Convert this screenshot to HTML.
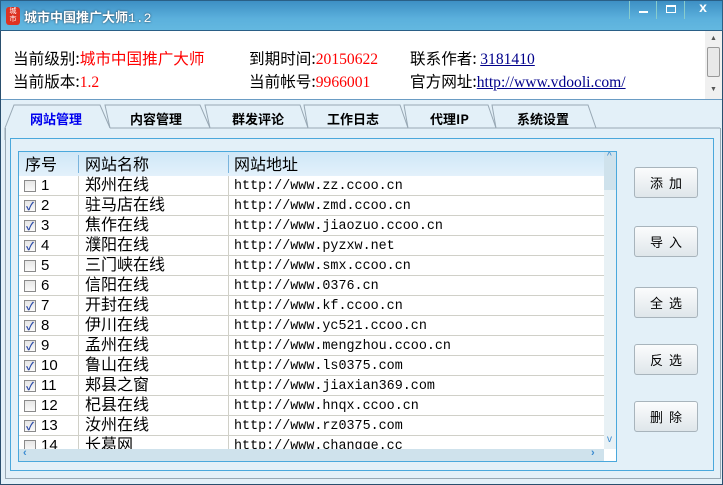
<!DOCTYPE html>
<html><head><meta charset="utf-8"><style>
*{margin:0;padding:0;box-sizing:border-box}
body{width:723px;height:485px;overflow:hidden;background:#e3f0f8;font-family:"Liberation Sans","Noto Sans CJK SC",sans-serif;position:relative}
.abs{position:absolute}
#title{left:0;top:0;width:723px;height:31px;background:linear-gradient(#3d8fc4,#5bb0dc 60%,#63b8e0);border:1px solid #2a5f86}
#info{left:1px;top:31px;width:721px;height:69px;background:#fff;border-bottom:1px solid #6a9cc4}
.t{position:absolute;font-size:15.6px;white-space:nowrap;color:#000;font-family:"Noto Sans CJK SC","Liberation Serif",sans-serif;line-height:18px}
.r{color:#f00}
.lk{color:#00008b;text-decoration:underline;font-family:"Liberation Serif",serif}
.tab{position:absolute;top:109px;font-size:13px;font-weight:bold;font-family:"Noto Sans CJK SC",sans-serif}
#list{left:18px;top:151px;width:599px;height:311px;border:1px solid #4aa8dc;background:#fff;overflow:hidden}
.hd{position:absolute;left:0;top:0;width:585px;height:24px;background:linear-gradient(#cfe7f7,#e3f1fb)}
.row{position:absolute;left:0;width:585px;height:20px;border-bottom:1px solid #d0d0c8;font-size:16px;font-family:"Noto Sans CJK SC",sans-serif}
.row span{position:absolute;top:0;line-height:19px;height:19px}
.nm{top:-2px !important}
.cb{position:absolute;left:5px;top:4px;width:12px;height:12px;border:1px solid #8a8a8a;background:linear-gradient(#e6e6e6,#fafafa);font-size:11px;line-height:10px;color:#2b4aa8;text-align:center;font-weight:bold}
.url{font-family:"Liberation Mono",monospace;font-size:13.4px;left:215px;top:1px !important}
.btn{position:absolute;left:634px;width:64px;height:31px;border:1px solid #a8b4bc;border-radius:3px;background:linear-gradient(#fbfcfd,#dfe6ea);font-size:13px;text-align:center;line-height:29px;letter-spacing:6px;text-indent:6px;font-family:"Noto Sans CJK SC",sans-serif}
</style></head><body>
<div id="title" class="abs">
 <div class="abs" style="left:5px;top:6px;width:14px;height:18px;background:#d32;border-radius:3px;color:#fff;font-size:7px;line-height:8px;text-align:center;padding-top:1px">城<br>市</div>
 <div class="abs" style="left:23px;top:6px;color:#fff;font-size:13px;font-weight:bold;font-family:'Noto Sans CJK SC',sans-serif;text-shadow:0 0 2px #234">城市中国推广大师<span style="font-family:'Liberation Mono';font-weight:normal">1.2</span></div>
 <div class="abs" style="left:628px;top:0;width:28px;height:18px;border-left:1px solid #8cc;border-right:1px solid #8cc"><div class="abs" style="left:9px;top:10px;width:9px;height:2px;background:#fff"></div></div>
 <div class="abs" style="left:656px;top:0;width:28px;height:18px;border-right:1px solid #8cc"><div class="abs" style="left:9px;top:4px;width:10px;height:8px;border:1px solid #fff;border-top-width:2px"></div></div>
 <div class="abs" style="left:684px;top:-2px;width:36px;height:20px;color:#fff;font-size:14px;text-align:center;font-weight:bold">x</div>
</div>
<div id="info" class="abs">
 <div class="t" style="left:12px;top:18px">当前级别:<span class="r">城市中国推广大师</span></div>
 <div class="t" style="left:12px;top:41px">当前版本:<span class="r" style="font-family:'Liberation Serif'">1.2</span></div>
 <div class="t" style="left:248px;top:18px">到期时间:<span class="r" style="font-family:'Liberation Serif'">20150622</span></div>
 <div class="t" style="left:248px;top:41px">当前帐号:<span class="r" style="font-family:'Liberation Serif'">9966001</span></div>
 <div class="t" style="left:409px;top:18px">联系作者: <span class="lk">3181410</span></div>
 <div class="t" style="left:409px;top:41px">官方网址:<span class="lk">http://www.vdooli.com/</span></div>
 <div class="abs" style="left:704px;top:0;width:17px;height:68px;background:#f0f0f0"><div class="abs" style="left:2px;top:16px;width:13px;height:30px;border:1px solid #999;border-radius:2px;background:#e8e8e8"></div><div class="abs" style="left:5px;top:4px;font-size:7px;color:#555">▲</div><div class="abs" style="left:5px;top:55px;font-size:7px;color:#555">▼</div></div>
</div>
<svg class="abs" style="left:0;top:100px" width="723" height="40">
 <path d="M5 28 L14 5 L100 5 L110 28" fill="#e3f0f8" stroke="#98a8b4"/>
 <path d="M110 28 L105 5 L200 5 L210 28" fill="#e3f0f8" stroke="#98a8b4"/>
 <path d="M210 28 L205 5 L300 5 L308 28" fill="#e3f0f8" stroke="#98a8b4"/>
 <path d="M308 28 L304 5 L400 5 L408 28" fill="#e3f0f8" stroke="#98a8b4"/>
 <path d="M408 28 L404 5 L488 5 L496 28" fill="#e3f0f8" stroke="#98a8b4"/>
 <path d="M496 28 L492 5 L588 5 L596 28" fill="#e3f0f8" stroke="#98a8b4"/>
 <path d="M110 28 L720 28" stroke="#98a8b4"/>
 <path d="M5 28 L5 40" stroke="#98a8b4"/>
</svg>
<div class="tab" style="left:30px;color:#0000ee">网站管理</div>
<div class="tab" style="left:130px">内容管理</div>
<div class="tab" style="left:232px">群发评论</div>
<div class="tab" style="left:327px">工作日志</div>
<div class="tab" style="left:430px">代理IP</div>
<div class="tab" style="left:517px">系统设置</div>
<div class="abs" style="left:10px;top:138px;width:704px;height:333px;border:1px solid #4aa8dc"></div>
<div class="abs" style="left:5px;top:128px;width:716px;height:351px;border-left:1px solid #98a8b4;border-bottom:1px solid #98a8b4;border-right:1px solid #98a8b4"></div>
<div class="abs" style="left:0;top:31px;width:723px;height:454px;border:1px solid #2a4f6e;border-top:none"></div>
<div id="list" class="abs">
 <div class="hd" style="font-size:16px;font-family:'Noto Sans CJK SC',sans-serif;line-height:20px">
  <span class="abs" style="left:6px;top:1px">序号</span>
  <div class="abs" style="left:59px;top:3px;width:1px;height:18px;background:#7ab4dc"></div>
  <span class="abs" style="left:66px;top:1px">网站名称</span>
  <div class="abs" style="left:209px;top:3px;width:1px;height:18px;background:#7ab4dc"></div>
  <span class="abs" style="left:215px;top:1px">网站地址</span>
 </div>
 <div id="rows"></div>
 <div class="abs" style="left:59px;top:24px;width:1px;height:274px;background:#d0d0c8"></div>
 <div class="abs" style="left:209px;top:24px;width:1px;height:274px;background:#d0d0c8"></div>
 <div class="abs" style="left:585px;top:0;width:14px;height:297px;background:#e8f1f5"><div class="abs" style="left:0;top:0;width:14px;height:38px;background:#cfe2ec"></div><div class="abs" style="left:3px;top:-1px;font-size:10px;color:#3a8ad0">^</div><div class="abs" style="left:3px;top:282px;font-size:10px;color:#3a8ad0">v</div></div>
 <div class="abs" style="left:0;top:297px;width:585px;height:13px;background:#cfe2ec"><div class="abs" style="left:4px;top:-2px;font-size:11px;color:#3a8ad0;font-weight:bold">‹</div><div class="abs" style="left:572px;top:-2px;font-size:11px;color:#3a8ad0;font-weight:bold">›</div></div>
</div>
<div class="btn" style="top:167px">添加</div>
<div class="btn" style="top:226px">导入</div>
<div class="btn" style="top:287px">全选</div>
<div class="btn" style="top:344px">反选</div>
<div class="btn" style="top:401px">删除</div>
<script>
var d=[[0,"郑州在线","zz.ccoo.cn"],[1,"驻马店在线","zmd.ccoo.cn"],[1,"焦作在线","jiaozuo.ccoo.cn"],[1,"濮阳在线","pyzxw.net"],[0,"三门峡在线","smx.ccoo.cn"],[0,"信阳在线","0376.cn"],[1,"开封在线","kf.ccoo.cn"],[1,"伊川在线","yc521.ccoo.cn"],[1,"孟州在线","mengzhou.ccoo.cn"],[1,"鲁山在线","ls0375.com"],[1,"郏县之窗","jiaxian369.com"],[0,"杞县在线","hnqx.ccoo.cn"],[1,"汝州在线","rz0375.com"],[0,"长葛网","changge.cc"]];
var h="";d.forEach(function(r,i){h+='<div class="row" style="top:'+(24+i*20)+'px"><div class="cb">'+(r[0]?'✓':'')+'</div><span style="left:22px;font-family:\'Liberation Sans\';font-size:15px">'+(i+1)+'</span><span class="nm" style="left:66px">'+r[1]+'</span><span class="url">http://www.'+r[2]+'</span></div>';});
document.getElementById("rows").innerHTML=h;
</script>
</body></html>
